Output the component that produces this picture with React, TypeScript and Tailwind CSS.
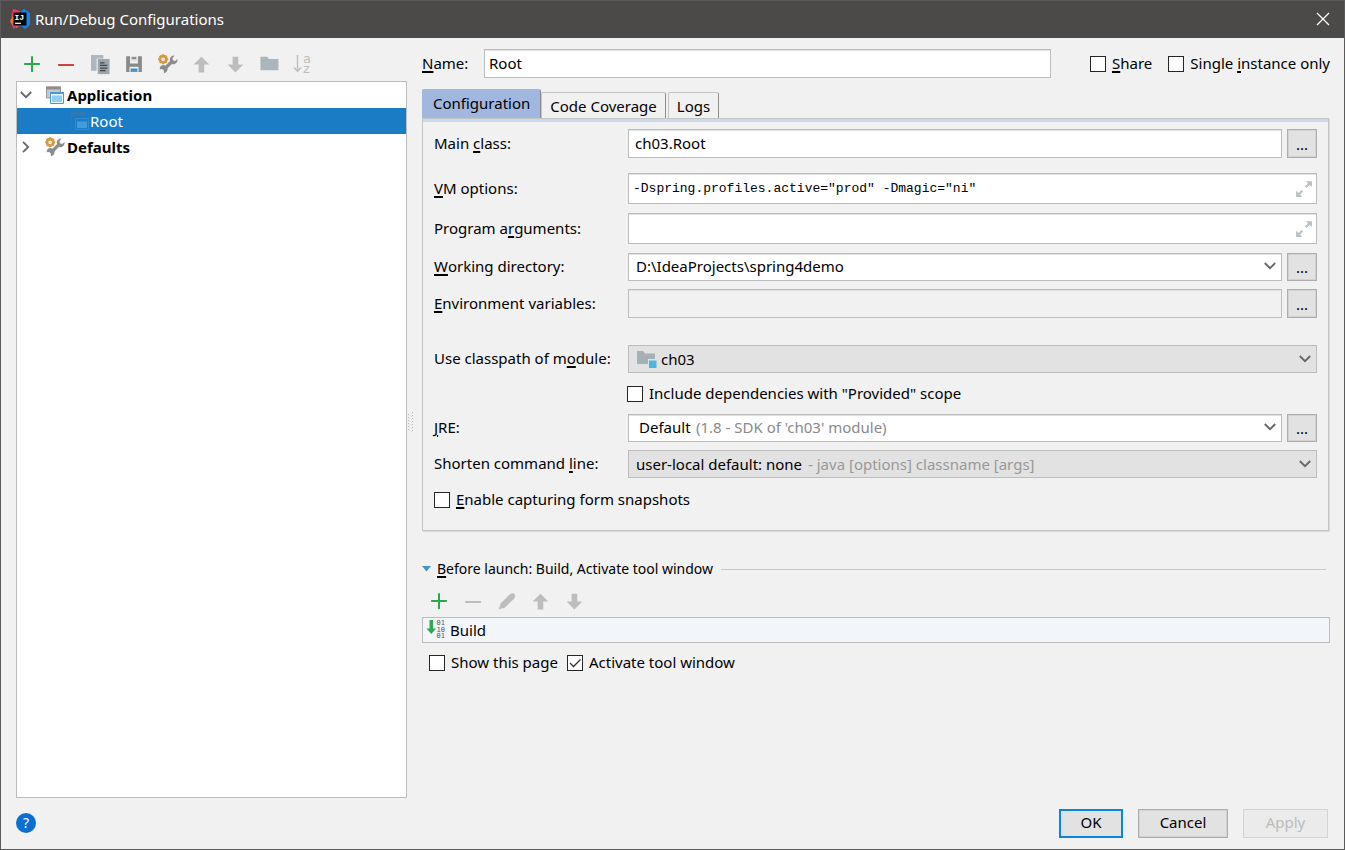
import { useState } from 'react';
import type { ReactNode } from 'react';
import clsx from 'clsx';

const FIELD = 'flex min-w-0 flex-1 items-center border border-[#bcbcbc] shadow-[inset_0_1px_0_#e2e2e2]';

function Svg({ children, className = 'size-[18px]', box = 16 }: { children: ReactNode; className?: string; box?: number }) {
  return (
    <svg viewBox={`0 0 ${box} ${box}`} className={clsx('shrink-0 overflow-visible', className)} fill="none" aria-hidden="true">
      {children}
    </svg>
  );
}

function PlusIcon() {
  return (
    <Svg>
      <path d="M8 1v14M1 8h14" stroke="#2ba84a" strokeWidth="1.8" />
    </Svg>
  );
}

function MinusIcon({ color }: { color: string }) {
  return (
    <Svg>
      <path d="M1 8.900h14" stroke={color} strokeWidth="1.8" />
    </Svg>
  );
}

function CopyIcon() {
  return (
    <Svg>
      <path d="M0 0h11v3H5v11H0z" fill="#acb7bf" />
      <path d="M6 3.500h10.500V17H6z" fill="#9aa7b0" />
      <path d="M8 7h4M8 9.300h6.500M8 11.600h6.500M8 13.900h5" stroke="#444" strokeWidth="1.100" />
    </Svg>
  );
}

function SaveIcon() {
  return (
    <Svg>
      <path d="M1 1h3.500v6.500h7V1H15v14H1z" fill="#8a8a8a" />
      <path d="M5.500 1h5v4.500h-5z" fill="#dcdcdc" />
      <path d="M6 2.700h4" stroke="#777" strokeWidth="1.400" />
      <path d="M4 10.500h8V15H4z" fill="#f1f1f1" />
      <path d="M5 12h6v3H5z" fill="#4a8fc4" />
    </Svg>
  );
}

function WrenchIcon() {
  return (
    <Svg className="size-5" box={20}>
      <path d="M6 15.500L14.500 7" stroke="#8c8c8c" strokeWidth="3.200" />
      <path d="M16.500 1.500a4.300 4.300 0 0 0-4.500 6l2.500 2.700c3 .5 5.500-2 5-5.200L17.200 7 14.800 6.300 14.600 4z" fill="#8c8c8c" />
      <path d="M2 13a4.300 4.300 0 0 1 5.200-1.500L9.500 14c.5 2.500-.8 4.500-3.500 5.300L5.800 16.500 4.200 15l-2.500.2z" fill="#8c8c8c" />
      <circle cx="5.200" cy="5.300" r="3.200" fill="#f8eedb" stroke="#d79a3d" strokeWidth="2.600" />
      <path d="M5.200.3v1.500M5.200 8.700v1.600M.2 5.300h1.500M8.600 5.300h1.600M1.700 1.800l1 1M7.700 7.800l1 1M8.700 1.800l-1 1M1.700 8.800l1-1" stroke="#d79a3d" strokeWidth="2" />
    </Svg>
  );
}

function ArrowIcon({ down = false }: { down?: boolean }) {
  return (
    <Svg>
      <path d={down ? 'M7.500 15.500l7-7H10v-7H5v7H.5z' : 'M7.500 1.500l7 7H10v7H5v-7H.5z'} fill="#bdbdbd" />
    </Svg>
  );
}

function FolderIcon() {
  return (
    <Svg>
      <path d="M-.5 1.500h6l1.500 2h8.500v10h-16z" fill="#aab5bc" />
    </Svg>
  );
}

function SortIcon() {
  return (
    <Svg className="size-5" box={20}>
      <path d="M3.500 1v16M0 13.500l3.500 3.700L7 13.500" stroke="#bdbdbd" strokeWidth="1.400" />
      <text fontSize="13" fontFamily="DejaVu Sans, sans-serif" fill="#bdbdbd">
        <tspan x="9" y="8.500">a</tspan>
        <tspan x="9" y="19">z</tspan>
      </text>
    </Svg>
  );
}

function PencilIcon() {
  return (
    <Svg>
      <path d="M.5 15.500l2-5.500 8-8 3-1.200L15.500 3l-1 2.700-8.300 8z" fill="#bdbdbd" />
    </Svg>
  );
}

function AppIcon({ faded = false }: { faded?: boolean }) {
  return (
    <Svg className="size-[18px]" box={18}>
      {faded ? (
        <>
          <path d="M.5 1h14v11H.5z" stroke="#3279ae" />
          <path d="M0 .5h15v3H0z" fill="#3279ae" />
          <path d="M4.500 6.500h13v11h-13z" fill="#1b7dc5" stroke="#2f8ccf" />
          <path d="M6 9.500h10V16H6z" fill="#459bda" />
        </>
      ) : (
        <>
          <path d="M.5 1h14v11H.5z" fill="#c9c9c9" stroke="#999" />
          <path d="M0 .5h15v3H0z" fill="#8f8f8f" />
          <path d="M4.500 6.500h13v11h-13z" fill="#e8f5fc" stroke="#4a9cc8" />
          <path d="M4 6h14v2H4z" fill="#4a9cc8" />
          <path d="M6 9.500h10V16H6z" fill="#90d0f2" />
        </>
      )}
    </Svg>
  );
}

function ModuleIcon() {
  return (
    <Svg className="size-5" box={20}>
      <path d="M0 2h6l2 2.500h10V10h-7v5H0z" fill="#a5b0b7" />
      <path d="M12 11.500h7.500V19H12z" fill="#4db6e2" />
    </Svg>
  );
}

function BuildIcon() {
  return (
    <Svg className="size-5" box={20}>
      <path d="M2.500 0h3.500v8.500h3L4.300 14-.5 8.500h3z" fill="#2fa84f" />
      <text fontSize="7" fontFamily="DejaVu Sans Mono, monospace" fill="#555">
        <tspan x="9.500" y="5">01</tspan>
        <tspan x="9.500" y="11.500">10</tspan>
        <tspan x="9.500" y="18">01</tspan>
      </text>
    </Svg>
  );
}

function LogoIcon() {
  return (
    <Svg className="size-5" box={20}>
      <path d="M3 0l7 2-1 8-7 1L1.500 6z" fill="#f03a6a" />
      <path d="M0 12l3-5 7 8-3 4-4.500-2z" fill="#f2722e" />
      <path d="M2.500 14l8 1 1 2-5 .5-3.500 2.500z" fill="#e8318a" />
      <path d="M11 2l3-2 6 4v12l-5 4-5-4z" fill="#1483f5" />
      <path d="M3.500 3.500h13v13h-13z" fill="#070707" />
      <path d="M5 14.300h6" stroke="#fff" strokeWidth="1.200" />
      <text x="4.500" y="10.500" fontSize="8" fontWeight="700" fontFamily="Liberation Mono, monospace" fill="#fff">IJ</text>
    </Svg>
  );
}

function Chevron({ right = false }: { right?: boolean }) {
  return (
    <Svg className={clsx('size-3', right && '-rotate-90')} box={12}>
      <path d="M.8 3l5.200 5.200L11.200 3" stroke="#666" strokeWidth="1.800" />
    </Svg>
  );
}

function ExpandIcon() {
  return (
    <Svg>
      <path d="M9.500 1H15v5.500zM1 9.500V15h5.500z" fill="#b9c0c4" />
      <path d="M12.500 3.500L9.500 6.500M3.500 12.500l3-3" stroke="#b9c0c4" strokeWidth="1.800" />
    </Svg>
  );
}

function IconButton({ label, disabled, children }: { label: string; disabled?: boolean; children: ReactNode }) {
  return (
    <button type="button" aria-label={label} disabled={disabled} className="flex h-6 w-[34px] items-center justify-center">
      {children}
    </button>
  );
}

// Mnemonic letter, underlined inside its label
function M({ children }: { children: ReactNode }) {
  return <span className="underline decoration-2 underline-offset-2">{children}</span>;
}

function Check({ children, defaultChecked }: { children: ReactNode; defaultChecked?: boolean }) {
  return (
    <label className="flex h-4 items-center gap-[6px] whitespace-nowrap">
      <span className="relative size-4">
        <input
          type="checkbox"
          defaultChecked={defaultChecked}
          className="peer block size-4 appearance-none border border-[#262626] bg-white"
        />
        <svg viewBox="0 0 16 16" className="pointer-events-none absolute inset-0 hidden size-4 peer-checked:block" fill="none">
          <path d="M3 8l3.500 3.500L13.500 4.500" stroke="#333" strokeWidth="1.300" />
        </svg>
      </span>
      <span className="pb-[2px]">{children}</span>
    </label>
  );
}

function Row({ id, label, className, children }: { id: string; label: ReactNode; className: string; children: ReactNode }) {
  return (
    <div className={clsx('flex', className)}>
      <label htmlFor={id} className="flex w-[194px] shrink-0 items-center pb-[2px] whitespace-pre">
        {label}
      </label>
      {children}
    </div>
  );
}

function Browse({ label }: { label: string }) {
  return (
    <button
      type="button"
      aria-label={label}
      className="ml-[5px] w-[30px] shrink-0 border border-[#adadad] bg-[#e2e2e2] shadow-[inset_0_0_0_1px_#d2d2d2]"
    >
      ...
    </button>
  );
}

const TABS = ['Configuration', 'Code Coverage', 'Logs'];

export default function App() {
  const [tab, setTab] = useState('Configuration');

  return (
    <div className="flex min-h-screen flex-col border border-[#5a5a5a] bg-[#f1f1f1] font-['Noto_Sans',sans-serif] text-[15px] leading-5 text-black">
      <header className="flex h-[37px] shrink-0 items-center bg-[#4b4a48] pr-[15px] pb-[2px] pl-[9px] text-white">
        <LogoIcon />
        <h1 className="ml-[5px] flex-1">Run/Debug Configurations</h1>
        <button type="button" aria-label="Close">
          <Svg className="size-3" box={12}>
            <path d="M0 0l12 12M12 0L0 12" stroke="#fff" strokeWidth="1.300" />
          </Svg>
        </button>
      </header>

      <main className="flex flex-1">
        <aside className="ml-[15px] flex w-[391px] shrink-0 flex-col">
          <div className="-ml-px flex h-[43px] items-center pt-2">
            <IconButton label="Add"><PlusIcon /></IconButton>
            <IconButton label="Remove"><MinusIcon color="#c9473f" /></IconButton>
            <IconButton label="Copy"><CopyIcon /></IconButton>
            <IconButton label="Save"><SaveIcon /></IconButton>
            <IconButton label="Edit defaults"><WrenchIcon /></IconButton>
            <IconButton label="Move up" disabled><ArrowIcon /></IconButton>
            <IconButton label="Move down" disabled><ArrowIcon down /></IconButton>
            <IconButton label="New folder"><FolderIcon /></IconButton>
            <IconButton label="Sort" disabled><SortIcon /></IconButton>
          </div>
          <ul className="flex-1 border border-[#bcbcbc] bg-white">
            <li className="flex h-[26px] items-center pl-[3px] font-bold">
              <Chevron />
              <span className="ml-[14px] flex items-center gap-[3px]"><AppIcon /> Application</span>
            </li>
            <li className="flex h-[26px] items-center gap-px bg-[#1a7cc5] pl-[54px] text-white">
              <AppIcon faded /> Root
            </li>
            <li className="flex h-[26px] items-center pl-[3px] font-bold">
              <Chevron right />
              <span className="ml-[13px] flex items-center gap-[2px]"><WrenchIcon /> Defaults</span>
            </li>
          </ul>
        </aside>

        <div className="flex w-[15px] shrink-0 items-center pt-2">
          <Svg className="size-5" box={20}>
            <path d="M1.500 2v18M5.500 0v20" stroke="#b9b9b9" strokeDasharray="1 2" />
            <path d="M2.500 3v17M4.500 1v19" stroke="#dcdcdc" strokeDasharray="1 2" />
          </Svg>
        </div>

        <section className="mr-[14px] min-w-0 flex-1 pt-[11px]">
          <div className="flex h-[29px] items-center">
            <label htmlFor="name" className="w-[62px] pb-[2px]"><M>N</M>ame:</label>
            <input id="name" defaultValue="Root" className={clsx(FIELD, 'h-full bg-white px-1 pb-[2px]')} />
            <div className="ml-[39px] flex gap-4">
              <Check><M>S</M>hare</Check>
              <Check>Single <M>i</M>nstance only</Check>
            </div>
          </div>

          <div className="mt-[11px] flex h-[29px] items-end" role="tablist">
            {TABS.map((t) => (
              <button
                key={t}
                type="button"
                role="tab"
                aria-selected={t === tab}
                onClick={() => setTab(t)}
                className={clsx(
                  'rounded-t-xs border border-b-0 whitespace-nowrap',
                  t === tab
                    ? 'h-[29px] border-[#a1b7df] border-r-[#8d8d8d] bg-[#a1b7df] px-[10px] pb-[2px]'
                    : 'mr-[2px] h-[26px] border-[#c4c4c4] border-r-[#8d8d8d] px-2',
                )}
              >
                {t}
              </button>
            ))}
          </div>

          <div className="mr-px border border-[#c4c4c4] shadow-[1px_1px_0_#cddcee]" role="tabpanel">
            <div className="h-[3px] bg-[#c8daf0]" />
            <form className="px-[11px] pt-[7px] pb-[22px]">
              <Row id="main-class" label={<>Main <M>c</M>lass:</>} className="h-[29px]">
                <input id="main-class" defaultValue="ch03.Root" className={clsx(FIELD, 'bg-white px-[6px] pb-[2px]')} />
                <Browse label="Browse main class" />
              </Row>
              <Row id="vm" label={<><M>V</M>M options:</>} className="mt-[15px] h-[31px]">
                <div className={clsx(FIELD, 'bg-white pr-[3px] pl-1')}>
                  <input
                    id="vm"
                    defaultValue={'-Dspring.profiles.active="prod" -Dmagic="ni"'}
                    className="min-w-0 flex-1 font-['Liberation_Mono',monospace] text-[13px]"
                  />
                  <button type="button" aria-label="Expand VM options"><ExpandIcon /></button>
                </div>
              </Row>
              <Row id="args" label={<>Program a<M>r</M>guments:</>} className="mt-[9px] h-[31px]">
                <div className={clsx(FIELD, 'bg-white pr-[3px] pl-1')}>
                  <input id="args" className="min-w-0 flex-1 font-['Liberation_Mono',monospace] text-[13px]" />
                  <button type="button" aria-label="Expand program arguments"><ExpandIcon /></button>
                </div>
              </Row>
              <Row id="dir" label={<><M>W</M>orking directory:</>} className="mt-[9px] h-[28px]">
                <div className={clsx(FIELD, 'bg-white pr-[5px] pb-[2px] pl-[7px]')}>
                  <input id="dir" defaultValue="D:\IdeaProjects\spring4demo" className="min-w-0 flex-1" />
                  <button type="button" aria-label="Recent directories"><Chevron /></button>
                </div>
                <Browse label="Browse working directory" />
              </Row>
              <Row id="env" label={<><M>E</M>nvironment variables:</>} className="mt-2 h-[29px]">
                <input id="env" readOnly className={clsx(FIELD, 'px-[6px]')} />
                <Browse label="Edit environment variables" />
              </Row>
              <Row id="module" label={<>Use classpath of m<M>o</M>dule:</>} className="mt-[27px] h-[28px]">
                <div className={clsx(FIELD, 'bg-[#e2e2e2] pr-[5px] pl-2')}>
                  <ModuleIcon />
                  <select id="module" className="ml-1 flex-1 appearance-none">
                    <option>ch03</option>
                  </select>
                  <Chevron />
                </div>
              </Row>
              <div className="mt-[13px] ml-[193px] flex">
                <Check>Include dependencies with "Provided" scope</Check>
              </div>
              <Row id="jre" label={<><M>J</M>RE:</>} className="mt-3 h-[28px]">
                <div className={clsx(FIELD, 'bg-white pr-[5px] pb-[2px] pl-[10px]')}>
                  <select id="jre" className="appearance-none">
                    <option>Default</option>
                  </select>
                  <span className="ml-[5px] flex-1 text-[#8a8a8a]">(1.8 - SDK of 'ch03' module)</span>
                  <Chevron />
                </div>
                <Browse label="Browse JRE" />
              </Row>
              <Row id="shorten" label={<>Shorten command <M>l</M>ine:</>} className="mt-2 h-[28px]">
                <div className={clsx(FIELD, 'bg-[#e2e2e2] pr-[5px] pl-[7px]')}>
                  <select id="shorten" className="appearance-none">
                    <option>user-local default: none</option>
                  </select>
                  <span className="ml-[5px] flex-1 text-[#999]">- java [options] classname [args]</span>
                  <Chevron />
                </div>
              </Row>
              <div className="mt-[14px] flex">
                <Check><M>E</M>nable capturing form snapshots</Check>
              </div>
            </form>
          </div>

          <div className="mt-7 flex h-5 items-center">
            <button type="button" className="flex items-center gap-[6px] text-sm">
              <Svg className="size-[9px]" box={9}>
                <path d="M0 1h9L4.500 6.500z" fill="#4595c4" />
              </Svg>
              <span><M>B</M>efore launch: Build, Activate tool window</span>
            </button>
            <div className="mr-1 ml-2 h-px flex-1 bg-[#c8c8c8]" />
          </div>
          <div className="mt-[10px] flex">
            <IconButton label="Add task"><PlusIcon /></IconButton>
            <IconButton label="Remove task" disabled><MinusIcon color="#bdbdbd" /></IconButton>
            <IconButton label="Edit task" disabled><PencilIcon /></IconButton>
            <IconButton label="Move task up" disabled><ArrowIcon /></IconButton>
            <IconButton label="Move task down" disabled><ArrowIcon down /></IconButton>
          </div>
          <ul className="mt-1 border border-[#bcbcbc] bg-[#f2f6fb]">
            <li className="flex h-6 items-center gap-[3px] pl-1">
              <BuildIcon /> Build
            </li>
          </ul>
          <div className="mt-3 ml-[7px] flex gap-[9px]">
            <Check>Show this page</Check>
            <Check defaultChecked>Activate tool window</Check>
          </div>
        </section>
      </main>

      <footer className="flex h-[51px] shrink-0 items-center gap-[15px] pr-4 pb-px pl-[15px]">
        <button type="button" aria-label="Help" className="mr-auto size-5 rounded-full bg-[#0a6fd0] text-sm text-white">
          ?
        </button>
        <button type="button" className="h-[29px] w-16 border-2 border-[#0a84e0] bg-[#e2e2e2] pb-[2px]">OK</button>
        <button type="button" className="h-[29px] w-[90px] border border-[#adadad] bg-[#e2e2e2] pb-[2px] shadow-[inset_0_0_0_1px_#d2d2d2]">
          Cancel
        </button>
        <button type="button" disabled className="h-[29px] w-[85px] border border-[#d4d4d4] bg-[#ebebeb] pb-[2px] text-[#bcbcbc]">
          Apply
        </button>
      </footer>
    </div>
  );
}
